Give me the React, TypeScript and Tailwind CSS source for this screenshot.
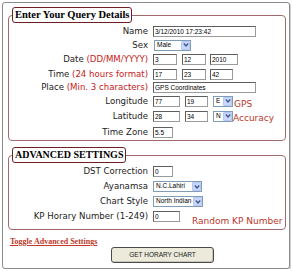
import type { ReactNode } from "react";

const sans = "font-['DejaVu_Sans',sans-serif]";
const small = "font-['Liberation_Sans',Arial,sans-serif] text-[6.5px] leading-none text-black";

const Field = ({ className, value }: { className: string; value: string }) => (
  <input
    readOnly
    value={value}
    className={`h-[11px] border border-[#5e5e5e] border-b-[#9a9a9a] border-r-[#9a9a9a] bg-white px-[1px] outline-none ${small} ${className}`}
  />
);

const Pick = ({ className, value }: { className: string; value: string }) => (
  <div className={`flex h-[11px] items-center border border-[#7f9db9] bg-white ${className}`}>
    <span className={`flex-1 truncate pl-[2px] ${small}`}>{value}</span>
    <span className="flex h-[9px] w-[9px] items-center justify-center rounded-[1px] border border-[#b6c8f2] bg-[#c8d7fb]">
      <svg width="6" height="4" viewBox="0 0 6 4">
        <path d="M0.8 0.6 L3 2.9 L5.2 0.6" fill="none" stroke="#41578a" strokeWidth="1.4" />
      </svg>
    </span>
  </div>
);

const Row = ({
  label,
  note,
  className,
  children,
}: {
  label: string;
  note?: string;
  className: string;
  children: ReactNode;
}) => (
  <div className={`flex items-center ${className}`}>
    <div className={`w-[139px] text-right text-[8.6px] leading-none text-[#1c1c1c] ${sans}`}>
      {label}
      {note && <span className="text-[#c41a1a]"> ({note})</span>}
    </div>
    <div className="ml-[5px] flex items-center">{children}</div>
  </div>
);

const Legend = ({ children, className }: { children: ReactNode; className: string }) => (
  <legend
    className={`ml-[3px] h-[16px] rounded-[3px] border-[1.5px] border-[#6e1f24] bg-white px-[2px] font-['Liberation_Serif',serif] font-bold leading-[13px] text-black ${className}`}
  >
    {children}
  </legend>
);

export default function App() {
  return (
    <div className="ml-[2px] mt-[2px] h-[267px] w-[288px] rounded-[3px] border border-[#8a8a8a] bg-white shadow-[1px_1px_0_#d0d0d0]">
      <fieldset className="ml-[5px] mt-[4px] w-[278px] rounded-[4px] border border-[#a36a6e] p-0">
        <Legend className="text-[10.5px]">Enter Your Query Details</Legend>
        <div className="pt-[1px]">
          <Row label="Name" className="h-[14px]">
            <Field className="w-[103px]" value="3/12/2010 17:23:42" />
          </Row>
          <Row label="Sex" className="h-[14px]">
            <Pick className="ml-[1px] w-[37px]" value="Male" />
          </Row>
          <Row label="Date" note="DD/MM/YYYY" className="h-[15px]">
            <Field className="w-[24px]" value="3" />
            <Field className="ml-[5px] w-[24px]" value="12" />
            <Field className="ml-[4px] w-[28px]" value="2010" />
          </Row>
          <Row label="Time" note="24 hours format" className="h-[14px]">
            <Field className="w-[24px]" value="17" />
            <Field className="ml-[5px] w-[24px]" value="23" />
            <Field className="ml-[4px] w-[23px]" value="42" />
          </Row>
          <Row label="Place" note="Min. 3 characters" className="h-[13px]">
            <Field className="w-[103px]" value="GPS Coordinates" />
          </Row>
          <Row label="Longitude" className="h-[14px]">
            <Field className="w-[27px]" value="77" />
            <Field className="ml-[5px] w-[23px]" value="19" />
            <Pick className="ml-[5px] w-[20px]" value="E" />
            <span className={`ml-[1px] mt-[7px] text-[9px] leading-none text-[#b8382c] ${sans}`}>GPS</span>
          </Row>
          <Row label="Latitude" className="h-[16px]">
            <Field className="w-[27px]" value="28" />
            <Field className="ml-[5px] w-[23px]" value="34" />
            <Pick className="ml-[5px] w-[20px]" value="N" />
            <span className={`mt-[5px] text-[9px] leading-none text-[#b8382c] ${sans}`}>Accuracy</span>
          </Row>
          <Row label="Time Zone" className="h-[16px]">
            <Field className="w-[20px]" value="5.5" />
          </Row>
        </div>
      </fieldset>

      <fieldset className="ml-[5px] mt-[6px] w-[278px] rounded-[4px] border border-[#a36a6e] p-0">
        <Legend className="text-[10px]">ADVANCED SETTINGS</Legend>
        <div className="pt-[1px] pb-[6px]">
          <Row label="DST Correction" className="h-[15px]">
            <Field className="w-[20px]" value="0" />
          </Row>
          <Row label="Ayanamsa" className="h-[15px]">
            <Pick className="w-[49px]" value="N.C.Lahiri" />
          </Row>
          <Row label="Chart Style" className="h-[15px]">
            <Pick className="w-[50px]" value="North Indian" />
          </Row>
          <Row label="KP Horary Number (1-249)" className="h-[14px]">
            <Field className="w-[27px]" value="0" />
            <span className={`ml-[12px] mt-[11px] text-[9px] leading-none text-[#b8382c] ${sans}`}>
              Random KP Number
            </span>
          </Row>
        </div>
      </fieldset>

      <a
        href="#"
        className="ml-[7px] mt-[7px] block w-fit font-['Liberation_Serif',serif] text-[8px] font-bold leading-[9px] text-[#c0392b] underline"
      >
        Toggle Advanced Settings
      </a>
      <button
        className="ml-[108px] mt-[1px] flex h-[16px] w-[103px] items-center justify-center rounded-[3px] border border-[#4a4a4a] bg-[#ebeadb] font-['Liberation_Sans',Arial,sans-serif] text-[6.5px] text-[#222] shadow-[inset_-1px_-1px_0_#c9c7b5]"
      >
        GET HORARY CHART
      </button>
    </div>
  );
}
